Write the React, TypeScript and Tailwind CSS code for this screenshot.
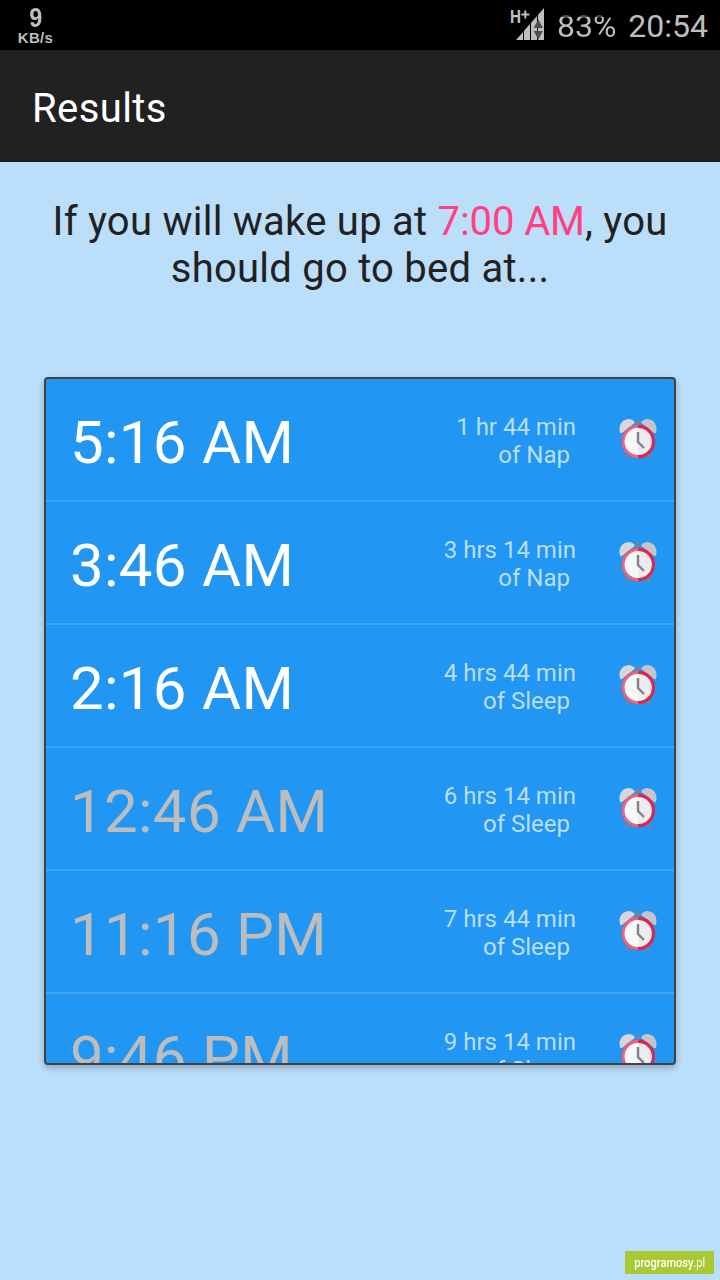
type Row = { time: string; duration: string; kind: 'Nap' | 'Sleep'; dim?: boolean }

const rows: Row[] = [
  { time: '5:16 AM', duration: '1 hr 44 min', kind: 'Nap' },
  { time: '3:46 AM', duration: '3 hrs 14 min', kind: 'Nap' },
  { time: '2:16 AM', duration: '4 hrs 44 min', kind: 'Sleep' },
  { time: '12:46 AM', duration: '6 hrs 14 min', kind: 'Sleep', dim: true },
  { time: '11:16 PM', duration: '7 hrs 44 min', kind: 'Sleep', dim: true },
  { time: '9:46 PM', duration: '9 hrs 14 min', kind: 'Sleep', dim: true },
]

function AlarmClock() {
  return (
    <svg width="38" height="40" viewBox="0 0 38 40" className="mb-[2px] shrink-0">
      {/* feet */}
      <path d="M10 35 7 39.2M28 35l3 4.2" stroke="#85828b" strokeWidth="2.8" />
      {/* bells */}
      <path d="M1.2 14C-1 8 2 1 8.5.2c3-.5 6 1 7.5 3.5L2.6 14.2z" fill="#d7d6da" />
      <path d="M36.8 14C39 8 36 1 29.5.2c-3-.5-6 1-7.5 3.5l13.4 10.5z" fill="#c5c4ca" />
      <path d="M19 0v8" stroke="#858189" strokeWidth="2.4" />
      {/* body */}
      <circle cx="19.3" cy="22.5" r="16.7" fill="#e0244e" />
      <path d="M19.3 5.8a16.7 16.7 0 0 0 0 33.4z" fill="#e56783" />
      <circle cx="19.3" cy="22.5" r="13.6" fill="#ececec" />
      <path d="M19.3 8.9a13.6 13.6 0 0 0 0 27.2z" fill="#f8f8f8" />
      <path d="M19 13v10l6 6" stroke="#838089" strokeWidth="2.4" fill="none" />
    </svg>
  )
}

function SignalIcon() {
  return (
    <svg width="35" height="34" viewBox="0 0 35 34" className="shrink-0">
      <text x="0" y="15.2" fontSize="17.5" textLength="11" lengthAdjust="spacingAndGlyphs" fontFamily="Roboto, sans-serif" fontWeight="700" fill="#bebebe">H</text>
      <path d="M15.3 2.5v8M11.3 6.5h8" stroke="#bebebe" strokeWidth="2" />
      <path d="M6 32 34 0v32z" fill="#bebebe" />
      <path d="M13.5 16v16M20.5 8v24M27.5 2v30" stroke="#000" strokeWidth="1" />
      <path d="m23.7 20 4.6-8.5L33 20zM23.7 23H33l-4.7 8.5z" fill="#505050" />
    </svg>
  )
}

function StatusBar() {
  return (
    <div className="flex h-[50px] justify-between bg-black pl-[17px] pr-[12px] text-[#bebebe]">
      <div className="flex w-[37px] flex-col items-center font-['Liberation_Sans',sans-serif] font-bold">
        <span className="mt-[6px] scale-x-[0.84] text-[28px] leading-[24px]">9</span>
        <span className="text-[15px] leading-[15px] tracking-[0.3px]">KB/s</span>
      </div>
      <div className="flex text-[32px] leading-[38px]">
        <div className="mr-[12px] mt-[8px]">
          <SignalIcon />
        </div>
        {/* glyph tops are shaded like the unfilled part of the battery */}
        <span className="mr-[12px] mt-[7px] h-[38px] bg-[linear-gradient(#505050_10px,#bebebe_10px)] bg-clip-text text-transparent">83%</span>
        <span className="mt-[7px]">20:54</span>
      </div>
    </div>
  )
}

function ResultRow({ time, duration, kind, dim }: Row) {
  return (
    <li className="flex h-[123px] shrink-0 items-center border-b-2 border-[#42a5f5] pl-[24px] pr-[17px]">
      <span className={`flex-1 pt-[6px] text-[60px] leading-[70px] tracking-[0.3px] ${dim ? 'text-[#bdbdbd]' : 'text-white'}`}>
        {time}
      </span>
      <div className="mr-[43px] pt-[2px] text-right text-[24px] leading-[28px] text-[#bbdefb]">
        <p>{duration}</p>
        <p className="pr-[6px]">of {kind}</p>
      </div>
      <AlarmClock />
    </li>
  )
}

export default function App() {
  return (
    <div className="flex h-[1280px] w-[720px] flex-col overflow-hidden bg-[#bbdefb] font-[Roboto,sans-serif]">
      <StatusBar />
      <header className="flex h-[112px] items-center border-b border-[#1a1a1a] bg-[#212121] pl-[32px] pt-[6px]">
        <h1 className="text-[40px] leading-[47px] tracking-[0.4px] text-white">Results</h1>
      </header>

      <main className="flex flex-1 flex-col px-[44px]">
        <p className="mt-[36px] text-center text-[40px] leading-[47px] tracking-[0.25px] text-[#212121]">
          If you will wake up at <span className="tracking-[-0.1px] text-[#ff4081]">7:00 AM</span>, you
          <br />
          should go to bed at...
        </p>
        <ul className="mt-[85px] flex h-[688px] flex-col overflow-hidden rounded-[4px] border-2 border-[#424242] bg-[#2196f3] shadow-[0_3px_6px_rgba(0,0,0,0.25)]">
          {rows.map((row) => (
            <ResultRow key={row.time} {...row} />
          ))}
        </ul>
      </main>

      <footer className="flex justify-end pb-[6px] pr-[6px]">
        <div className="flex h-[23px] w-[89px] items-center justify-center bg-[#a9c934] text-white">
          <span className="scale-x-[0.85] whitespace-nowrap text-[13px] font-medium leading-[15px]">
            programosy<span className="font-normal">.pl</span>
          </span>
        </div>
      </footer>
    </div>
  )
}
